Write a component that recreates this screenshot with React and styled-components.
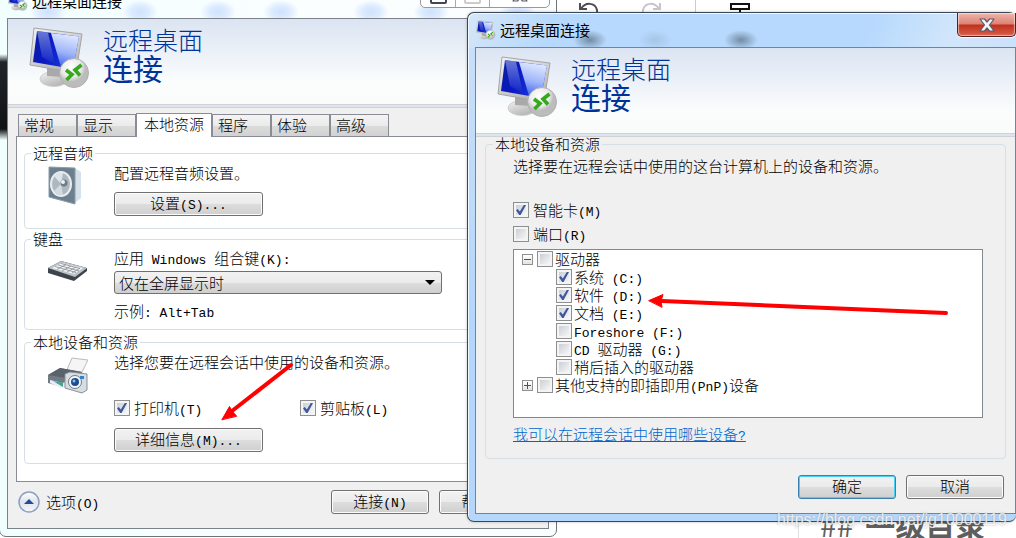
import React, { useState } from 'react'
import styled, { createGlobalStyle, css } from 'styled-components'

const GlobalStyle = createGlobalStyle`
  * {
    box-sizing: border-box;
  }
  body {
    margin: 0;
    background: #fff;
    color: #000;
    font-family: "Noto Sans CJK SC", sans-serif;
    font-size: 15px;
    font-weight: 300;
    line-height: 20px;
  }
  button, input, select {
    font: inherit;
    color: inherit;
    margin: 0;
  }
  p, h1, h2, ul {
    margin: 0;
    padding: 0;
    font-weight: inherit;
    font-size: inherit;
  }
`;

const Latin = styled.span`
  font-family: "Liberation Mono", monospace;
  font-size: 13px;
  font-weight: 400;
  line-height: 0;
  white-space: pre;
`;

export default function App() {
  return (
    <Desktop>
      <GlobalStyle />
      <Editor />
      <MainWindow />
      <DeviceWindow />
      <Arrows />
      <Watermark>https://blog.csdn.net/jg10000119</Watermark>
    </Desktop>
  )
}

const Desktop = styled.main`
  position: relative;
  height: 100vh;
  overflow: hidden;
  white-space: nowrap;
`;

// the page behind both windows
function Editor() {
  return (
    <>
      <EditorTools>
        <svg width="22" height="24" fill="none" stroke="#4d4d55" strokeWidth="2">
          <path d="M2 3v6h7M3 9C7 2 17 2 19 10c1 5-2 8-5 9" />
        </svg>
        <svg width="22" height="24" fill="none" stroke="#c6c6ca" strokeWidth="2">
          <path d="M20 3v6h-7M19 9C15 2 5 2 3 10c-1 5 2 8 5 9" />
        </svg>
        <ToolDivider />
        <svg width="22" height="24" fill="none" stroke="#111" strokeWidth="2">
          <path d="M2 4h18v5H2zM2 13h18M11 9v4" />
        </svg>
      </EditorTools>
      <EditorText>
        <span>##</span>
        <span>一级目录</span>
      </EditorText>
    </>
  )
}

const EditorTools = styled.div`
  position: absolute;
  top: 0;
  left: 578px;
  display: flex;
  gap: 33px;
  align-items: flex-start;
  svg:first-child {
    margin-right: 7px;
  }
`;

const ToolDivider = styled.i`
  width: 1px;
  height: 20px;
  background: #ccc;
`;

const EditorText = styled.div`
  position: absolute;
  left: 798px;
  top: 504px;
  display: flex;
  gap: 12px;
  padding-left: 21px;
  border-left: 1px solid #e0e0e0;
  color: #5e5e5e;
  font-size: 30px;
  font-weight: 700;
  line-height: 40px;
  span:first-child {
    font-weight: 400;
  }
`;

function MainWindow() {
  const [tab, setTab] = useState('本地资源')
  return (
    <WindowOne>
      <GlassBlobs>
        {[30, 122, 200, 263, 353, 413, 500].map((x) => (
          <Blob key={x} style={{ left: x }} />
        ))}
      </GlassBlobs>
      <TitleBar>
        <MonitorIcon size={20} />
        <h1>远程桌面连接</h1>
      </TitleBar>
      <CaptionButtons>
        <button aria-label="最小化"><i /></button>
        <button aria-label="最大化"><i /></button>
        <button aria-label="关闭"><CrossIcon muted /></button>
      </CaptionButtons>
      <Client>
        <Banner />
        <Tabs role="tablist">
          {['常规', '显示', '本地资源', '程序', '体验', '高级'].map((name) => (
            <Tab key={name} role="tab" $active={name === tab} aria-selected={name === tab} onClick={() => setTab(name)}>
              {name}
            </Tab>
          ))}
        </Tabs>
        <TabPage>
          <Group $end={12}>
            <legend>远程音频</legend>
            <Section>
              <SpeakerIcon />
              <Column $gap={9}>
                <p>配置远程音频设置。</p>
                <PushButton $wide>设置<Latin>(S)...</Latin></PushButton>
              </Column>
            </Section>
          </Group>
          <Group $end={9}>
            <legend>键盘</legend>
            <Section>
              <KeyboardIcon />
              <KeyColumn $gap={4}>
                <label htmlFor="combo">应用<Latin> Windows </Latin>组合键<Latin>(K):</Latin></label>
                <SelectBox>
                  <select id="combo">
                    <option>仅在全屏显示时</option>
                  </select>
                  <svg width="10" height="5"><path d="M0 0h10L5 5z" /></svg>
                </SelectBox>
                <Example>示例<Latin>: Alt+Tab</Latin></Example>
              </KeyColumn>
            </Section>
          </Group>
          <LastGroup $end={11}>
            <legend>本地设备和资源</legend>
            <Section>
              <PrinterIcon />
              <Column $gap={10}>
                <p>选择您要在远程会话中使用的设备和资源。</p>
                <CheckPair>
                  <Check defaultChecked>打印机<Latin>(T)</Latin></Check>
                  <Check defaultChecked>剪贴板<Latin>(L)</Latin></Check>
                </CheckPair>
                <PushButton $wide>详细信息<Latin>(M)...</Latin></PushButton>
              </Column>
            </Section>
          </LastGroup>
        </TabPage>
        <Footer>
          <OptionsButton>
            <svg width="22" height="22">
              <defs>
                <linearGradient id="round" x2="0" y2="1">
                  <stop stopColor="#fff" />
                  <stop offset=".5" stopColor="#dfe5ec" />
                  <stop offset="1" stopColor="#f5f8fb" />
                </linearGradient>
              </defs>
              <circle cx="11" cy="11" r="10" fill="url(#round)" stroke="#8e9fc0" strokeWidth="1.500" />
              <path d="M6 13l5-5 5 5z" fill="#28489c" />
            </svg>
            <span>选项<Latin>(O)</Latin></span>
          </OptionsButton>
          <PushButton>连接<Latin>(N)</Latin></PushButton>
          <PushButton>帮助<Latin>(H)</Latin></PushButton>
        </Footer>
      </Client>
    </WindowOne>
  )
}

const drives = [
  { name: <>系统<Latin> (C:)</Latin></>, on: true },
  { name: <>软件<Latin> (D:)</Latin></>, on: true },
  { name: <>文档<Latin> (E:)</Latin></>, on: true },
  { name: <Latin>Foreshore (F:)</Latin> },
  { name: <><Latin>CD </Latin>驱动器<Latin> (G:)</Latin></> },
  { name: '稍后插入的驱动器' },
]

function DeviceWindow() {
  return (
    <WindowTwo>
      <GlassBlobs>
        {[105, 170, 256].map((x, i) => (
          <Smudge key={x} $faint={i === 1} style={{ left: x }} />
        ))}
      </GlassBlobs>
      <TitleBar>
        <MonitorIcon size={20} />
        <h1>远程桌面连接</h1>
      </TitleBar>
      <CloseButton aria-label="关闭"><CrossIcon /></CloseButton>
      <Client>
        <Banner />
        <DeviceGroup $end={14}>
          <legend>本地设备和资源</legend>
          <p>选择要在远程会话中使用的这台计算机上的设备和资源。</p>
          <TopChecks>
            <Check defaultChecked>智能卡<Latin>(M)</Latin></Check>
            <Check>端口<Latin>(R)</Latin></Check>
          </TopChecks>
          <Tree>
            <TreeRow>
              <Expander aria-label="折叠" />
              <Check tight>驱动器</Check>
            </TreeRow>
            {drives.map((d, i) => (
              <TreeRow key={i} $child>
                <Check tight defaultChecked={d.on}>{d.name}</Check>
              </TreeRow>
            ))}
            <TreeRow>
              <Expander aria-label="展开" $closed />
              <Check tight>其他支持的即插即用<Latin>(PnP)</Latin>设备</Check>
            </TreeRow>
          </Tree>
          <HelpLink href="#devices">我可以在远程会话中使用哪些设备<Latin>?</Latin></HelpLink>
        </DeviceGroup>
        <DialogButtons>
          <PushButton $default>确定</PushButton>
          <PushButton>取消</PushButton>
        </DialogButtons>
      </Client>
    </WindowTwo>
  )
}

const Banner = () => (
  <BannerBox>
    <MonitorIcon size={62} />
    <BannerTitle>
      <span>远程桌面</span>
      <strong>连接</strong>
    </BannerTitle>
  </BannerBox>
)

const Check = ({ children, tight, defaultChecked }) => (
  <CheckLabel $tight={tight}>
    <input type="checkbox" defaultChecked={defaultChecked} />
    <span>{children}</span>
  </CheckLabel>
)

const Frame = styled.section`
  position: absolute;
  padding: 0 7px 7px;
  border: 1px solid #3c4654;
  border-radius: 7px;
`;

const WindowOne = styled(Frame)`
  left: -1px;
  top: -17px;
  width: 558px;
  border-color: #6f7477;
  background:
    linear-gradient(#fff0 70px, #20252a 78px, #101214 145px, #fff0 156px) 0 0 / 7px 100% no-repeat,
    linear-gradient(90deg, #f2ffff, #fbfeff 60%);
`;

const WindowTwo = styled(Frame)`
  left: 467px;
  right: 0;
  top: 12px;
  padding-right: 0;
  border-right: 0;
  background:
    linear-gradient(115deg, #d5e6f8 0, #b7d9fd 80px, #b7d9fd 370px, #d2e6fb 450px, #c3defa 560px) 0 0 / 100% 35px no-repeat,
    linear-gradient(#c9e0fa, #b5d7fb 60%);
  box-shadow: inset 1px 1px #f1f8ff, 0 0 3px #0004;
`;

const GlassBlobs = styled.div`
  position: absolute;
  inset: 0 0 auto;
  height: 34px;
  overflow: hidden;
`;

const Blob = styled.i`
  position: absolute;
  top: 16px;
  width: 36px;
  height: 24px;
  background: radial-gradient(closest-side, #cfe2fd, #dcebfe 50%, #fff0);
`;

const Smudge = styled.i`
  position: absolute;
  top: 17px;
  width: 34px;
  height: 20px;
  background: radial-gradient(closest-side, #62788f, #fff0);
  opacity: ${(p) => (p.$faint ? 0.2 : 0.8)};
`;

const TitleBar = styled.header`
  position: relative;
  display: flex;
  align-items: center;
  gap: 4px;
  height: 34px;
  padding-left: 1px;
  h1 {
    font-weight: 400;
  }
`;

const CaptionButtons = styled.div`
  position: absolute;
  top: -1px;
  right: 6px;
  display: flex;
  height: 25px;
  border: 1px solid #999;
  border-radius: 0 0 5px 5px;
  background: #fff;
  button {
    width: 34px;
    padding: 0;
    border: 0;
    background: none;
  }
  button + button {
    border-left: 1px solid #aaa;
  }
  button:last-child {
    width: 60px;
  }
  i {
    display: block;
    width: 17px;
    height: 12px;
    margin: 4px auto 0;
    border: 2px solid #44474f;
    border-radius: 2px;
  }
  button:nth-child(2) i {
    border-color: #ccc;
  }
`;

const CloseButton = styled.button`
  position: absolute;
  top: 0;
  right: 0;
  display: grid;
  place-items: center;
  width: 59px;
  height: 24px;
  padding: 0;
  border: 1px solid #5c1c1c;
  border-top: 0;
  border-radius: 0 0 5px 5px;
  background: linear-gradient(#f0b5ac, #dd8274 11px, #c0311c 12px, #d8604a);
  box-shadow: inset 0 0 1px 1px #fff8, 0 1px 1px #fff;
`;

const Client = styled.div`
  position: relative;
  border: 1px solid #7b828b;
  background: #f0f0f0;
`;

const BannerBox = styled.div`
  display: flex;
  gap: 12px;
  height: 89px;
  padding: 6px 0 0 21px;
  border-bottom: 4px double #d2d2d2;
  background: linear-gradient(#dbe4f2, #eef3f9 45%, #fbfdfd 75%, #fafcfc);
  svg {
    margin-top: 2px;
  }
`;

const BannerTitle = styled.h2`
  display: flex;
  flex-direction: column;
  color: #003399;
  font-size: 25px;
  line-height: 28px;
  strong {
    font-size: 30px;
    font-weight: 400;
  }
`;

const Tabs = styled.div`
  position: relative;
  z-index: 1;
  display: flex;
  align-items: flex-end;
  height: 29px;
  padding-left: 10px;
`;

const Tab = styled.button`
  width: 59px;
  height: 22px;
  margin-bottom: 1px;
  padding: 0 0 1px 5px;
  border: 1px solid #898c95;
  border-bottom: 0;
  background: linear-gradient(#f4f4f4, #ebebeb 50%, #dcdcdc 51%, #d2d2d2);
  line-height: 20px;
  text-align: left;
  ${(p) => p.$active && css`
    width: 76px;
    height: 24px;
    margin-bottom: 0;
    padding: 0 0 3px 7px;
    background: #fff;
  `}
`;

const TabPage = styled.div`
  margin: -1px 8px 0;
  padding: 6px 7px 17px;
  border: 1px solid #898c95;
  background: #fff;
`;

const Group = styled.fieldset`
  min-width: 0;
  margin: 0;
  padding: 0 0 ${(p) => p.$end}px;
  border: 1px solid #d5dfe5;
  border-radius: 4px;
  legend {
    margin-left: 6px;
    padding: 0 2px;
  }
`;

const LastGroup = styled(Group)`
  margin-top: 2px;
`;

const Section = styled.div`
  display: flex;
  gap: 26px;
  height: min-content;
  padding-left: 23px;
`;

const Column = styled.div`
  display: flex;
  flex-direction: column;
  align-items: flex-start;
  gap: ${(p) => p.$gap}px;
`;

const KeyColumn = styled(Column)`
  line-height: 18px;
`;

const SelectBox = styled.div`
  display: grid;
  grid-template-columns: 1fr 17px;
  align-items: center;
  width: 328px;
  select {
    grid-area: 1 / 1 / 2 / 3;
    height: 23px;
    padding: 0 4px;
    appearance: none;
    border: 1px solid #707070;
    border-radius: 3px;
    background: linear-gradient(#f2f2f2, #ebebeb 50%, #dddddd 51%, #cfcfcf);
    line-height: 20px;
  }
  svg {
    grid-area: 1 / 2;
    pointer-events: none;
  }
`;

const Example = styled.p`
  padding-top: 4px;
`;

const CheckPair = styled.div`
  display: grid;
  grid-template-columns: 186px auto;
  padding: 16px 0 0;
`;

const CheckLabel = styled.label`
  display: flex;
  align-items: center;
  gap: ${(p) => (p.$tight ? 2 : 4)}px;
  input {
    appearance: none;
    display: grid;
    place-items: center;
    width: 16px;
    height: 16px;
    border: 1px solid #8e8f8f;
    background: linear-gradient(135deg, #cbcfd5, #f6f6f6) 50% / 10px 10px no-repeat #f4f4f4;
  }
  input:checked::after {
    content: '';
    width: 10px;
    height: 10px;
    background: #3f579b;
    clip-path: polygon(0 52%, 18% 40%, 38% 66%, 78% 0, 100% 0, 46% 100%, 32% 100%);
  }
`;

const PushButton = styled.button`
  width: ${(p) => (p.$wide ? 149 : 98)}px;
  height: 24px;
  padding: 0 0 2px;
  border: 1px solid #707070;
  border-radius: 3px;
  background: linear-gradient(#f2f2f2, #ebebeb 50%, #dddddd 51%, #cfcfcf);
  box-shadow: inset 0 0 0 1px #fcfcfc;
  line-height: 20px;
  ${(p) => p.$default && css`
    border-color: #3c7fb1;
    box-shadow: inset 0 0 0 1px #48d0f5;
  `}
`;

const Footer = styled.div`
  display: flex;
  gap: 10px;
  padding: 8px 11px 14px 10px;
`;

const OptionsButton = styled.button`
  display: flex;
  align-items: center;
  gap: 6px;
  height: 24px;
  margin-right: auto;
  padding: 0;
  border: 0;
  background: none;
`;

const DeviceGroup = styled(Group)`
  margin: -1px 9px 0;
  padding-left: 27px;
  padding-right: 22px;
  legend {
    margin-left: -20px;
    line-height: 16px;
  }
  p {
    padding-top: 4px;
  }
`;

const TopChecks = styled.div`
  display: flex;
  flex-direction: column;
  align-items: flex-start;
  gap: 4px;
  padding: 24px 0 5px;
`;

const Tree = styled.ul`
  list-style: none;
  padding-bottom: 23px;
  border: 1px solid #828790;
  background: #fff;
  line-height: 18px;
`;

const TreeRow = styled.li`
  display: flex;
  align-items: center;
  gap: 4px;
  height: 18px;
  padding-left: ${(p) => (p.$child ? 42 : 8)}px;
`;

const Expander = styled.button`
  width: 11px;
  height: 11px;
  padding: 0;
  border: 1px solid #919191;
  background:
    linear-gradient(#34519b, #34519b) 50% / 7px 1px no-repeat,
    linear-gradient(#34519b, #34519b) 50% / 1px ${(p) => (p.$closed ? 7 : 0)}px no-repeat,
    linear-gradient(#fff, #e4e4e4);
`;

const HelpLink = styled.a`
  display: inline-block;
  margin-top: 6px;
  color: #0066cc;
`;

const DialogButtons = styled.div`
  display: flex;
  justify-content: flex-end;
  gap: 10px;
  padding: 16px 11px 14px;
`;

const Watermark = styled.p`
  position: absolute;
  right: 9px;
  top: 508px;
  color: #fffc;
  font-family: "Liberation Sans", sans-serif;
  font-size: 16px;
  font-weight: 400;
  line-height: 24px;
  text-shadow: 0 0 2px #6668;
`;

const ArrowLayer = styled.svg`
  position: absolute;
  left: 0;
  top: 0;
  pointer-events: none;
`;

const Arrows = () => (
  <ArrowLayer width="1016" height="538" fill="#f00" stroke="#f00" strokeLinecap="round">
    <path d="M291 365L232 411" strokeWidth="4" />
    <path d="M222 419.500L229.500 406.500 232 411 236.500 416z" strokeWidth="1" />
    <path d="M946 313L662 301" strokeWidth="4" />
    <path d="M649 300.500L663 294.500 661 301 662 307z" strokeWidth="1" />
  </ArrowLayer>
)

const CrossIcon = ({ muted }) => (
  <svg width="16" height="14" viewBox="0 0 16 14">
    <path
      d="M1 1h4.500L8 4l2.500-3H15l-4.500 6 4.500 6h-4.500L8 10l-2.500 3H1l4.500-6z"
      fill={muted ? '#fff' : '#f4f4f4'} stroke="#565a6b" strokeWidth="1.200" strokeLinejoin="round"
    />
  </svg>
)

const MonitorIcon = ({ size }) => (
  <svg width={size} height={size} viewBox="0 0 62 62">
    <defs>
      <linearGradient id="screen" x2="1" y2=".3">
        <stop stopColor="#0a1fa0" />
        <stop offset=".4" stopColor="#0a18c0" />
        <stop offset="1" stopColor="#1a3ce0" />
      </linearGradient>
      <linearGradient id="shine" x1=".4" x2=".2" y2="1">
        <stop stopColor="#dfe8ff" />
        <stop offset=".5" stopColor="#9db4fa" />
        <stop offset="1" stopColor="#2f50e8" />
      </linearGradient>
      <linearGradient id="glint" x2="0" y2="1">
        <stop stopColor="#a9b8f0" />
        <stop offset="1" stopColor="#1028c8" />
      </linearGradient>
      <linearGradient id="metal" x2=".6" y2="1">
        <stop stopColor="#f4f4f4" />
        <stop offset="1" stopColor="#b4b4b4" />
      </linearGradient>
      <radialGradient id="ball" cx=".4" cy=".3">
        <stop stopColor="#fff" />
        <stop offset=".7" stopColor="#e9e9e9" />
        <stop offset="1" stopColor="#bcbcbc" />
      </radialGradient>
    </defs>
    <ellipse cx="25" cy="52" rx="14" ry="7.500" fill="url(#metal)" stroke="#cfcfcf" />
    <path d="M18 40l15 2 1 8-16-1z" fill="#a9a9a9" />
    <path d="M5 1L53 7 47 46 1 38z" fill="url(#metal)" stroke="#a5a5a5" />
    <path d="M8 4L50 9.500 44 42 4 35z" fill="url(#screen)" />
    <path d="M8 4L19 5.500 26 37 13 30z" fill="url(#glint)" opacity=".6" />
    <path d="M22 6L50 9.500 44 42 32 40z" fill="url(#shine)" />
    <circle cx="45" cy="46" r="14.500" fill="url(#ball)" stroke="#b0b0b0" />
    <path d="M37 43l6 4.500-5.500 5.500M52.500 38l-6.500 5 5 5.500" fill="none" stroke="#35a81c" strokeWidth="3.600" />
  </svg>
)

const SpeakerIcon = () => (
  <svg width="40" height="42" viewBox="0 0 40 42">
    <path d="M27 5l6 4v26l-6 5z" fill="#d4e0ea" />
    <path d="M1 4l26 1v36L1 34z" fill="#6c7f8e" stroke="#8d9ca8" />
    <ellipse cx="13" cy="21" rx="11" ry="13" fill="#e9edf0" />
    <ellipse cx="13" cy="21" rx="9" ry="11" fill="#aeb8c0" />
    <path d="M13 21L6 13a10 11 0 0 1 9-3z" fill="#dde4ea" />
    <path d="M13 21l-7 7a10 11 0 0 0 9 4z" fill="#d3dbe2" />
    <circle cx="16" cy="20" r="3.500" fill="#6f7b86" />
    <circle cx="15" cy="19" r="2" fill="#eef2f5" />
  </svg>
)

const KeyboardIcon = () => (
  <svg width="40" height="42" viewBox="0 0 40 42">
    <path d="M0 19l13-7 26 7v3L26 32 0 24z" fill="#3e444b" />
    <path d="M0 19l13-7 26 7-12 9z" fill="#bcc2c8" />
    <path d="M4 19l10-5 21 5-9 6z" fill="#f4f5f6" />
    <path d="M7 17.500l21 6M10 16l21 6M13 14.500l19 5M9 20.500l9-5M14 22l9-5M19 23l9-5M24 24l8-5" stroke="#858b92" strokeWidth=".8" />
  </svg>
)

const PrinterIcon = () => (
  <svg width="40" height="42" viewBox="0 0 40 42">
    <path d="M24 6l16 2-8 16-14-4z" fill="#f5f5f5" stroke="#bbb" />
    <path d="M0 23l12-7 22 4v10L14 35 0 31z" fill="#727b84" />
    <path d="M0 23l12-7 22 4-16 6z" fill="#5a626b" />
    <path d="M2 28l13 3 4-2v6l-6 1-11-5z" fill="#e9eef2" />
    <path d="M5 29l10 2v4z" fill="#3f9ad4" />
    <path d="M9 31l5-1 1 4z" fill="#4cae46" />
    <path d="M17 22l5-2 17 2v16l-5 3-17-5z" fill="#d6dde3" stroke="#87919b" />
    <circle cx="27" cy="30" r="6.500" fill="#f7f9fa" stroke="#6d7984" />
    <circle cx="27" cy="30" r="4" fill="#1e4c8c" />
    <circle cx="26" cy="29" r="1.500" fill="#79c3ff" />
    <path d="M32 24h4v3h-4z" fill="#3284c9" />
  </svg>
)
